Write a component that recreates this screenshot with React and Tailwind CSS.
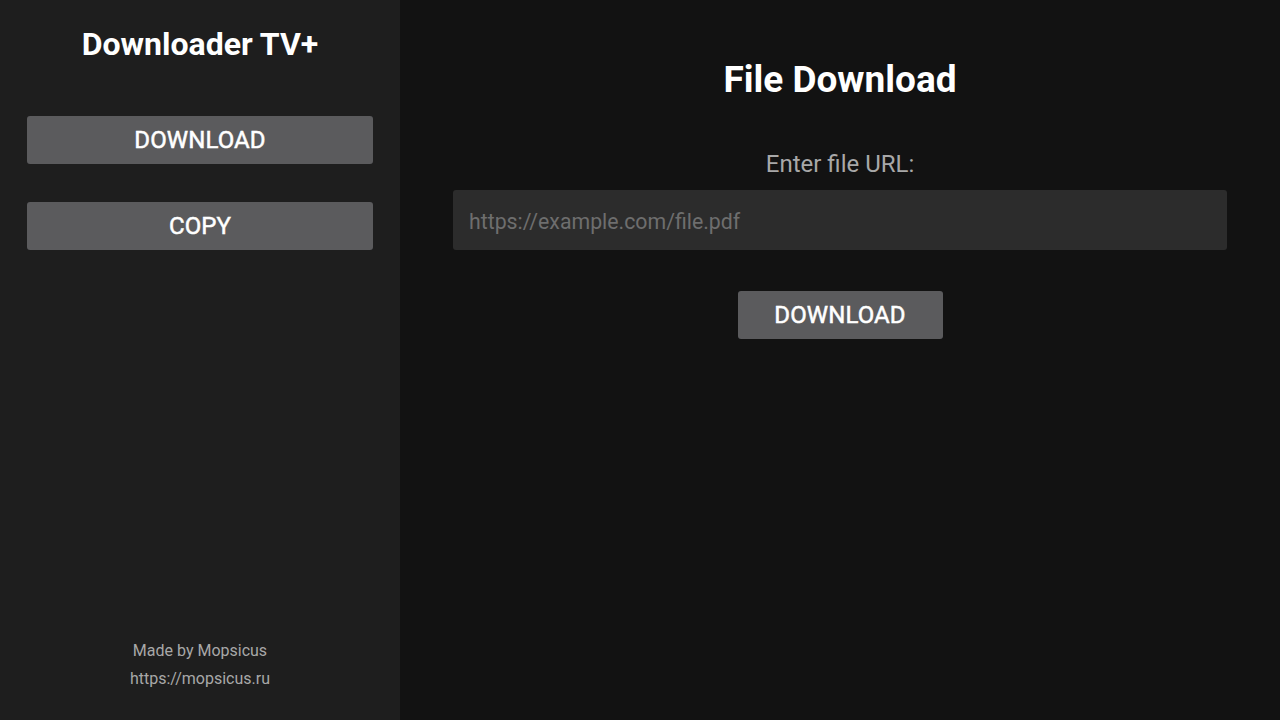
import React from "react";

export default function App() {
  return (
    <div className="flex h-[720px] w-[1280px] bg-[#121212] text-white" style={{ fontFamily: "Roboto, 'Noto Sans', sans-serif" }}>
      <aside className="flex w-[400px] shrink-0 flex-col bg-[#1e1e1e] px-[27px]">
        <h1 className="mt-[25px] text-center text-[32px] font-bold leading-[38px]">Downloader TV+</h1>
        <button className="mt-[53px] h-[48px] w-full rounded-[3px] bg-[#5b5b5d] text-[24px] font-normal tracking-[0.1px] text-white [-webkit-text-stroke:0.5px_white]">DOWNLOAD</button>
        <button className="mt-[38px] h-[48px] w-full rounded-[3px] bg-[#5b5b5d] text-[24px] font-normal tracking-[0.1px] text-white [-webkit-text-stroke:0.5px_white]">COPY</button>
        <div className="mt-auto mb-[27px] flex flex-col items-center text-[16px] leading-[28px] text-[#a8a8a8]">
          <span>Made by Mopsicus</span>
          <span>https://mopsicus.ru</span>
        </div>
      </aside>
      <main className="flex flex-1 flex-col items-center px-[53px]">
        <h2 className="mt-[57px] text-[37px] font-bold leading-[46px]">File Download</h2>
        <div className="mt-[46px] text-[24px] leading-[30px] text-[#a8a8a8]">Enter file URL:</div>
        <div className="mt-[11px] flex h-[60px] w-full items-center rounded-[3px] bg-[#2c2c2c] px-[16px] pt-[3px] text-[21.3px] text-[#6e6e6e]">https://example.com/file.pdf</div>
        <button className="mt-[41px] h-[48px] w-[205px] rounded-[3px] bg-[#5b5b5d] text-[24px] font-normal tracking-[0.1px] text-white [-webkit-text-stroke:0.5px_white]">DOWNLOAD</button>
      </main>
    </div>
  );
}
